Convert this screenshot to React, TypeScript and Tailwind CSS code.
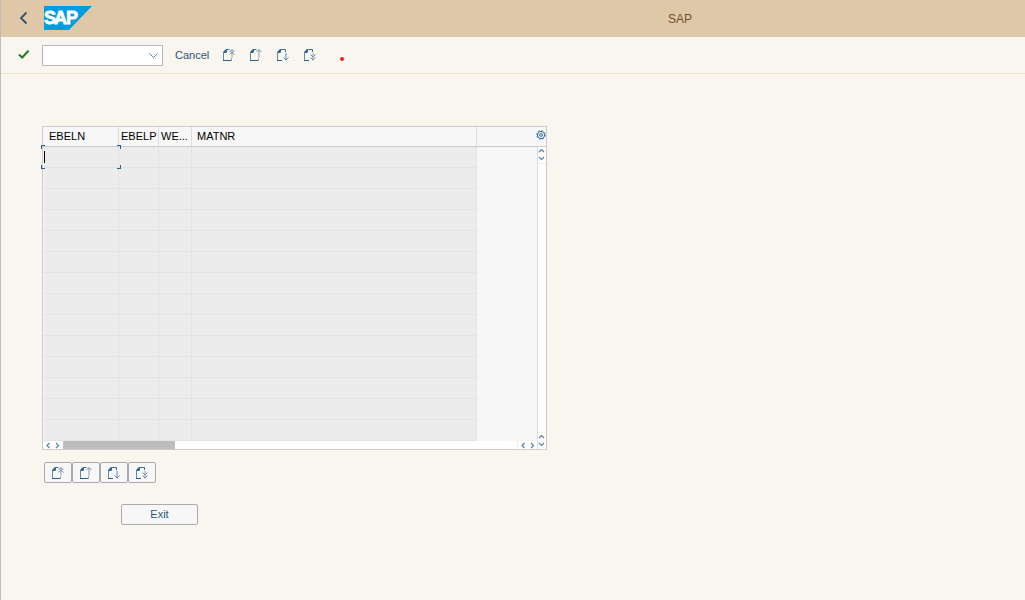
import React from "react";

type PageKind = "first" | "previous" | "next" | "last";

const pages: { kind: PageKind; label: string }[] = [
  { kind: "first", label: "First page" },
  { kind: "previous", label: "Previous page" },
  { kind: "next", label: "Next page" },
  { kind: "last", label: "Last page" },
];

const columns = ["EBELN", "EBELP", "WE...", "MATNR"];
const rows = Array.from({ length: 14 }, (_, i) => i + 1);

function PageIcon({ kind }: { kind: PageKind }) {
  const up = kind === "first" || kind === "previous";
  return (
    <svg width="12" height="12" viewBox="0 0 12 12" fill="none" aria-hidden="true">
      <path d="M0 4V3L3 0H4V3L3 4Z" fill="#2f6591" />
      <path d={up ? "M3 0.5H6.5" : "M3 0.5H8.5V3"} stroke="#3f6c95" />
      <path d="M0.5 3V11.5" stroke="#6288ae" />
      <path d={up ? "M0 11.5H9" : "M0 11.5H5"} stroke="#2b618f" />
      {up && <path d="M8.5 9V12" stroke="#8fa9c4" />}
      {kind === "first" && (
        <>
          <path d="M9 1V8.5" stroke="#a58f9c" />
          <path d="M6.5 3L9 0.5L11.5 3M6.5 5.5L9 3L11.5 5.5" stroke="#6591bd" />
        </>
      )}
      {kind === "previous" && (
        <>
          <path d="M9 1V8.5" stroke="#a58f9c" />
          <path d="M6.5 3L9 0.5L11.5 3" stroke="#6591bd" />
        </>
      )}
      {kind === "next" && (
        <path d="M9 4V11.5M6.5 8.5L9 11L11.5 8.5" stroke="#5b89bb" />
      )}
      {kind === "last" && (
        <>
          <path d="M9 4V11.5" stroke="#a58f9c" />
          <path d="M6.5 5.5L9 8L11.5 5.5M6.5 8.5L9 11L11.5 8.5" stroke="#6591bd" />
        </>
      )}
    </svg>
  );
}

function Chevron({ dir }: { dir: "up" | "down" | "left" | "right" }) {
  const paths = {
    up: "M1 4L3.5 1.5L6 4",
    down: "M1 2L3.5 4.5L6 2",
    left: "M4.5 1L2 3.5L4.5 6",
    right: "M2 1L4.5 3.5L2 6",
  };
  return (
    <svg
      width="7"
      height={dir === "up" || dir === "down" ? 6 : 7}
      viewBox={dir === "up" || dir === "down" ? "0 0 7 6" : "0 0 7 7"}
      fill="none"
      stroke="#5680a6"
      strokeWidth="1.2"
      aria-hidden="true"
    >
      <path d={paths[dir]} />
    </svg>
  );
}

function SapLogo() {
  return (
    <svg width="48" height="24" viewBox="0 0 48 24" role="img" aria-label="SAP">
      <path d="M0 0H48L25 24H0Z" fill="#009de0" />
      <text
        x="0"
        y="18"
        fill="#fff"
        stroke="#fff"
        strokeWidth="0.8"
        fontFamily="Liberation Sans, Arial, sans-serif"
        fontWeight="bold"
        fontSize="18"
      >
        <tspan x="0">S</tspan>
        <tspan x="10">A</tspan>
        <tspan x="22">P</tspan>
      </text>
    </svg>
  );
}

function FocusFrame() {
  return (
    <span className="pointer-events-none absolute -top-0.5 -left-[3px] z-10 h-6 w-20">
      <span className="absolute top-0 left-0 size-1 border-t border-l border-[#2b618f]" />
      <span className="absolute top-0 right-0 size-1 border-t border-r border-[#2b618f]" />
      <span className="absolute bottom-0 left-0 size-1 border-b border-l border-[#2b618f]" />
      <span className="absolute right-0 bottom-0 size-1 border-r border-b border-[#2b618f]" />
      <span className="absolute top-1.5 left-[3px] h-3 w-px bg-black" />
    </span>
  );
}

function StepPair({ className }: { className: string }) {
  return (
    <div className={`flex flex-col items-start bg-white ${className}`}>
      <button type="button" aria-label="Scroll up" className="flex h-2 items-center">
        <Chevron dir="up" />
      </button>
      <button type="button" aria-label="Scroll down" className="flex h-2 items-start">
        <Chevron dir="down" />
      </button>
    </div>
  );
}

function SidePair() {
  return (
    <>
      <button type="button" aria-label="Scroll left" className="flex">
        <Chevron dir="left" />
      </button>
      <button type="button" aria-label="Scroll right" className="flex">
        <Chevron dir="right" />
      </button>
    </>
  );
}

function DataGrid() {
  return (
    <div className="w-[505px] border border-[#cbcbcb] bg-[#f7f7f7]">
      <div className="flex">
        <div className="min-w-0 flex-1">
          <table className="w-full table-fixed border-separate border-spacing-0">
            <colgroup>
              <col className="w-[76px]" />
              <col className="w-10" />
              <col className="w-[33px]" />
              <col className="w-[285px]" />
              <col />
            </colgroup>
            <thead>
              <tr>
                {columns.map((name, i) => (
                  <th
                    key={name}
                    scope="col"
                    className={`h-5 border-r border-b border-r-[#dcdcdc] border-b-[#cbcbcb] p-0 text-left text-[11px] leading-[19px] font-normal whitespace-nowrap text-black ${
                      i === 0 ? "pl-1.5" : i === 3 ? "pl-[5px]" : "pl-0.5"
                    }`}
                  >
                    {name}
                  </th>
                ))}
                <td className="border-b border-[#cbcbcb] p-0" />
              </tr>
            </thead>
            <tbody>
              {rows.map((row) => (
                <tr key={row}>
                  {columns.map((name, i) => (
                    <td
                      key={name}
                      className={`relative h-[21px] border-r border-b border-[#e3e3e3] bg-[#ececec] p-0 ${
                        i === 0 ? "border-l border-l-[#f7f7f7]" : ""
                      }`}
                    >
                      <input
                        readOnly
                        aria-label={`${name} row ${row}`}
                        className="block h-5 w-full bg-transparent px-1 text-[11px] outline-none"
                      />
                      {row === 1 && i === 0 && <FocusFrame />}
                    </td>
                  ))}
                  <td className="p-0" />
                </tr>
              ))}
            </tbody>
          </table>
          <div className="flex h-2 items-center bg-white">
            <div className="flex w-5 gap-0.5 pl-0.5">
              <SidePair />
            </div>
            <div className="h-2 w-28 bg-[#bdbdbd]" />
            <div className="ml-auto flex h-2 items-center gap-0.5 border-l border-[#f3ede2] pr-px pl-0.5">
              <SidePair />
            </div>
          </div>
        </div>
        <div className="flex w-[9px] flex-col">
          <button
            type="button"
            aria-label="Table settings"
            className="flex h-5 shrink-0 justify-end border-b border-[#cbcbcb] pt-[3px]"
          >
            <svg
              width="10"
              height="10"
              viewBox="0 0 10 10"
              fill="none"
              stroke="#356c9b"
              className="shrink-0"
              aria-hidden="true"
            >
              <circle cx="5" cy="5" r="3.6" />
              <circle cx="5" cy="5" r="4.3" strokeWidth="0.9" strokeDasharray="1.7 1.68" />
              <circle cx="5" cy="5" r="1.4" />
            </svg>
          </button>
          <div className="flex flex-1 flex-col justify-between border-l border-[#dcdcdc] bg-white">
            <StepPair className="border-b border-[#f3ede2]" />
            <StepPair className="border-t border-[#f3ede2]" />
          </div>
        </div>
      </div>
    </div>
  );
}

export default function App() {
  return (
    <div className="flex min-h-screen flex-col border-l border-[#bdbdbd] bg-[#f9f6ef] font-['Liberation_Sans',Arial,sans-serif] text-[11px] text-[#2d5578]">
      <header className="flex h-[37px] items-center bg-[#dfc8a7] pb-px">
        <button type="button" aria-label="Back" className="ml-[18px] flex w-[25px]">
          <svg width="9" height="14" viewBox="0 0 9 14" fill="none" stroke="#34516e" strokeWidth="1.8" aria-hidden="true">
            <path d="M7.5 1.5L2 7L7.5 12.5" />
          </svg>
        </button>
        <SapLogo />
        <h1 className="ml-[576px] pt-px text-[12px] text-[#75502d]">SAP</h1>
      </header>

      <nav className="flex h-[37px] items-center border-b border-[#eee2cf]" aria-label="Toolbar">
        <button type="button" aria-label="Confirm" className="ml-[17px] flex w-6">
          <svg width="12" height="10" viewBox="0 0 12 10" fill="none" stroke="#237a2b" strokeWidth="2" aria-hidden="true">
            <path d="M1 4.5L4.2 7.5L10.5 0.8" />
          </svg>
        </button>
        <div className="relative h-[21px] w-[121px]">
          <input
            type="text"
            aria-label="Command"
            className="block h-full w-full border border-[#b9b9b9] bg-white px-1 outline-none"
          />
          <button type="button" aria-label="Command history" className="absolute top-2 right-[5px] flex">
            <svg width="9" height="6" viewBox="0 0 9 6" fill="none" stroke="#5c87ab" aria-hidden="true">
              <path d="M0.5 0.5L4.5 4.5L8.5 0.5" />
            </svg>
          </button>
        </div>
        <button type="button" className="ml-3 w-12 text-left">
          Cancel
        </button>
        <div className="flex gap-[15px]">
          {pages.map(({ kind, label }) => (
            <button key={kind} type="button" aria-label={label} className="flex">
              <PageIcon kind={kind} />
            </button>
          ))}
        </div>
        <span className="mt-2 ml-6 size-1 rounded-full bg-[#ec1c24]" />
      </nav>

      <main className="pt-[52px] pl-[41px]">
        <DataGrid />
        <div className="mt-3 ml-0.5 flex">
          {pages.map(({ kind, label }) => (
            <button
              key={kind}
              type="button"
              aria-label={label}
              className="flex h-[21px] w-7 items-center justify-center rounded-xs border border-[#ababab] bg-[#f7f7f7]"
            >
              <PageIcon kind={kind} />
            </button>
          ))}
        </div>
        <button
          type="button"
          className="mt-[21px] ml-[79px] flex h-[21px] w-[77px] items-center justify-center rounded-xs border border-[#ababab] bg-[#f7f7f7]"
        >
          Exit
        </button>
      </main>
    </div>
  );
}
